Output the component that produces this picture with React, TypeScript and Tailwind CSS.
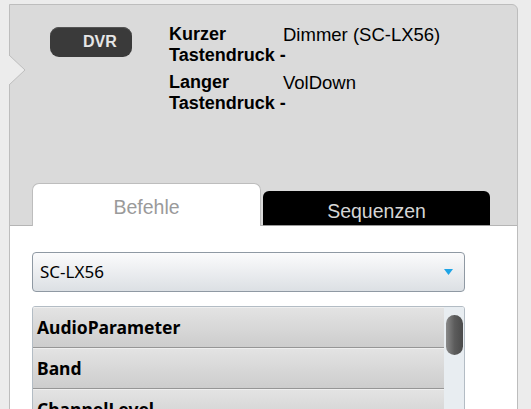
export default function App() {
  const commands = ['AudioParameter', 'Band', 'ChannelLevel'];

  return (
    <div className="w-[531px] h-[409px] overflow-hidden bg-[#ececec] pt-1 pl-[9px] font-['Liberation_Sans',Arial,sans-serif]">
      <div className="relative w-[509px] h-[420px] border border-[#bdbdbd] rounded-tr-[6px] bg-[#dadada]">
        {/* notch on the left edge */}
        <svg className="absolute left-[-1px] top-[50px]" width="18" height="32" viewBox="0 0 18 32">
          <polygon points="0,0 16,15 0,30" fill="#ececec" />
          <polyline points="0,0 16,15 0,30" fill="none" stroke="#bdbdbd" strokeWidth="1" />
        </svg>

        {/* Gray head */}
        <div className="h-[221px] flex flex-col border-b border-[#b5b5b5]">
          <div className="flex items-start pt-[19px] pl-[40px]">
            <div className="mt-[3px] w-[82px] h-[30px] rounded-[9px] bg-[#3a3a3a] shadow-[inset_0_1px_0_#555] flex items-center pl-[33px] text-[#e6e6e6] text-[16px] font-bold">
              DVR
            </div>
            <div className="ml-[37px] grid grid-cols-[114px_auto] gap-y-[6px] text-[18px] leading-[21px] text-black">
              <div className="font-bold whitespace-nowrap">
                Kurzer
                <br />
                Tastendruck -
              </div>
              <div className="text-[18.5px]">Dimmer (SC-LX56)</div>
              <div className="font-bold whitespace-nowrap">
                Langer
                <br />
                Tastendruck -
              </div>
              <div className="text-[18.5px]">VolDown</div>
            </div>
          </div>

          {/* Tabs */}
          <div className="mt-auto flex items-end gap-[2px] pl-[22px] -mb-px relative">
            <div className="w-[229px] h-[43px] bg-white border border-b-0 border-[#bdbdbd] rounded-t-[7px] flex items-start justify-center pt-[9px] text-[19.5px] text-[#9a9a9a]">
              Befehle
            </div>
            <div className="w-[227px] h-[35px] bg-black rounded-t-[6px] border-b border-[#9a9a9a] flex items-start justify-center pt-[6px] text-[19.5px] text-[#d6d6d6]">
              Sequenzen
            </div>
          </div>
        </div>

        {/* White content */}
        <div className="bg-white h-[200px] pt-[26px] pl-[22px] font-['Noto_Sans',sans-serif]">
          <div className="w-[433px] h-[40px] rounded-[4px] border border-[#8f99a3] bg-gradient-to-b from-[#fbfbfc] to-[#dce0e4] flex items-center justify-between pl-[7px] pr-[11px] text-[17px] text-black">
            <span>SC-LX56</span>
            <svg width="9" height="6" viewBox="0 0 9 6">
              <polygon points="0,0 9,0 4.5,6" fill="#1ea4e6" />
            </svg>
          </div>

          <div className="mt-[14px] w-[433px] h-[120px] rounded-[3px] border border-[#b3bcc4] flex overflow-hidden">
            <div className="flex-1">
              {commands.map((c) => (
                <div
                  key={c}
                  className="h-[41px] flex items-center pl-[4px] border-t border-[#efefef] border-b border-b-[#969696] bg-gradient-to-b from-[#e3e3e3] to-[#cdcdcd] text-[17.5px] font-bold text-black"
                >
                  {c}
                </div>
              ))}
            </div>
            <div className="w-[20px] bg-[#e8edf1] flex justify-center">
              <div className="mt-[8px] w-[17px] h-[40px] rounded-full bg-gradient-to-r from-[#8a8a8a] via-[#5c5c5c] to-[#4a4a4a]" />
            </div>
          </div>
        </div>
      </div>
    </div>
  );
}
